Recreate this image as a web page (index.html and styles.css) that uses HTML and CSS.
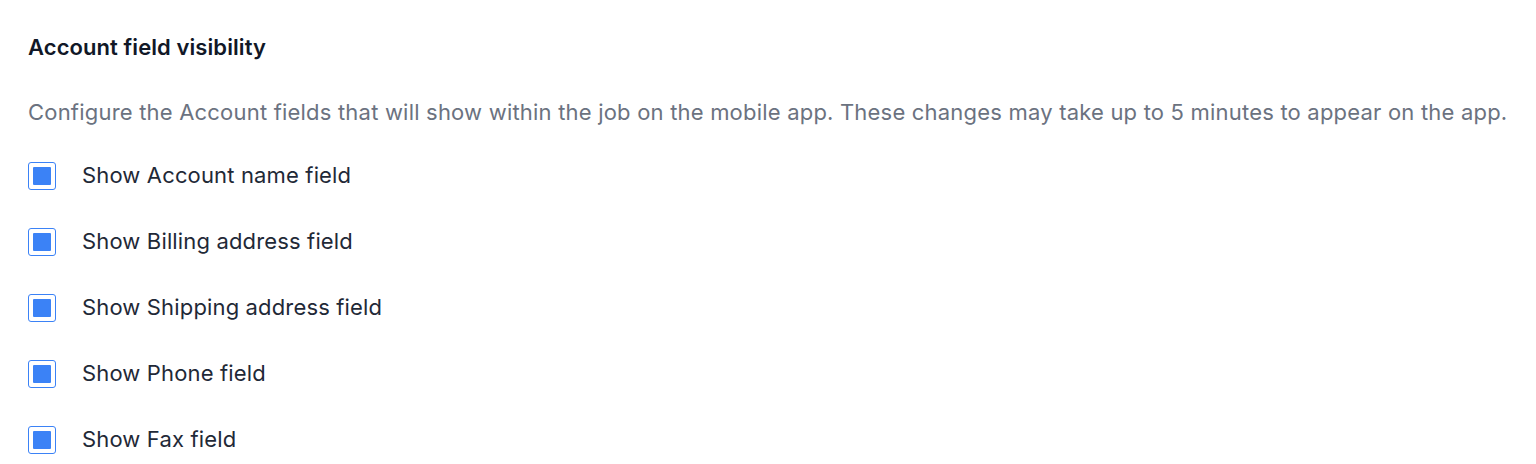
FILE: index.html
```html
<!DOCTYPE html>
<html>
<head>
<meta charset="utf-8">
<link rel="stylesheet" href="styles.css">
</head>
<body>
<section class="panel">
  <h2 class="title">Account field visibility</h2>
  <p class="desc">Configure the Account fields that will show within the job on the mobile app. These changes may take up to 5 minutes to appear on the app.</p>
  <ul class="options">
    <li class="option"><span class="check"><span class="check-fill"></span></span><span class="label">Show Account name field</span></li>
    <li class="option"><span class="check"><span class="check-fill"></span></span><span class="label">Show Billing address field</span></li>
    <li class="option"><span class="check"><span class="check-fill"></span></span><span class="label">Show Shipping address field</span></li>
    <li class="option"><span class="check"><span class="check-fill"></span></span><span class="label">Show Phone field</span></li>
    <li class="option"><span class="check"><span class="check-fill"></span></span><span class="label">Show Fax field</span></li>
  </ul>
</section>
</body>
</html>
```
FILE: styles.css
```css
html, body {
  margin: 0;
  padding: 0;
  background: #ffffff;
}
body {
  font-family: Inter, "Noto Sans", sans-serif;
  overflow: hidden;
}
.panel {
  padding: 32px 28px 0 28px;
}
.title {
  margin: 0;
  font-size: 22px;
  font-weight: 600;
  line-height: 30px;
  letter-spacing: 0.08px;
  color: #111827;
}
.desc {
  margin: 35px 0 0 0;
  font-size: 22px;
  line-height: 30px;
  letter-spacing: 0.2px;
  color: #6b7280;
  white-space: nowrap;
}
.options {
  list-style: none;
  margin: 35px 0 0 0;
  padding: 0;
  display: flex;
  flex-direction: column;
  gap: 38px;
}
.option {
  display: flex;
  align-items: center;
  height: 28px;
}
.check {
  box-sizing: border-box;
  width: 28px;
  height: 28px;
  border: 1px solid #3b82f6;
  border-radius: 3px;
  display: flex;
  align-items: center;
  justify-content: center;
  flex-shrink: 0;
}
.check-fill {
  width: 18px;
  height: 18px;
  background: #3b82f6;
  border-radius: 1px;
}
.label {
  margin-left: 26px;
  margin-top: -2px;
  font-size: 22px;
  line-height: 30px;
  letter-spacing: 0.15px;
  color: #1f2937;
}
```
